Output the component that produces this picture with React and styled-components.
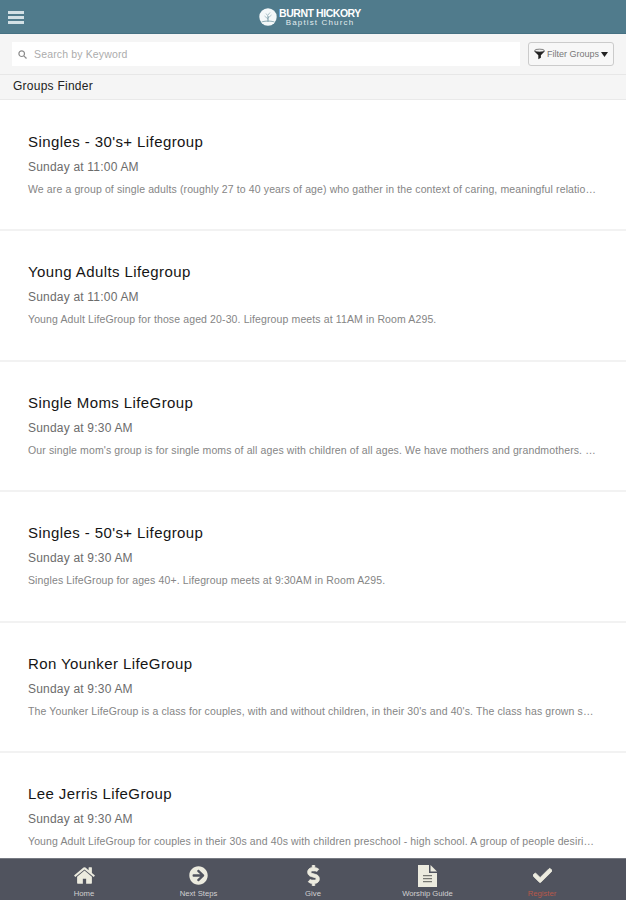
import React, { useState } from "react";
import styled, { createGlobalStyle } from "styled-components";
import { FaArrowCircleRight, FaDollarSign, FaCheck } from "react-icons/fa";

const GlobalStyle = createGlobalStyle`
  * {
    box-sizing: border-box;
  }

  body {
    margin: 0;
    font-family: "Liberation Sans", Arial, sans-serif;
    background: #fff;
  }
`;

const Wrapper = styled.div`
  display: flex;
  flex-direction: column;
  height: 900px;
  overflow: hidden;
`;

const Header = styled.header`
  display: grid;
  grid-template-columns: 1fr auto 1fr;
  align-items: center;
  flex: none;
  height: 34px;
  padding: 0 14px 0 8px;
  background: #507b8c;
  border-bottom: 1px solid #467183;
`;

const MenuButton = styled.button`
  display: flex;
  flex-direction: column;
  gap: 2px;
  width: 16px;
  padding: 1px 0 0;
  border: 0;
  background: none;
`;

const MenuLine = styled.span`
  height: 3px;
  background: #d3e0e5;
`;

const Brand = styled.div`
  display: flex;
  align-items: center;
  gap: 2px;
  color: #fff;
`;

const BrandText = styled.div`
  display: flex;
  flex-direction: column;
  align-items: center;
  width: 83px;
  padding-top: 2px;
`;

const BrandName = styled.span`
  font-size: 10.5px;
  font-weight: 700;
  line-height: 10px;
  letter-spacing: -0.45px;
  white-space: nowrap;
`;

const BrandSub = styled.span`
  font-size: 8px;
  line-height: 10px;
  letter-spacing: 1.15px;
  white-space: nowrap;
  color: #e3ecef;
`;

const SearchBar = styled.div`
  display: flex;
  align-items: center;
  flex: none;
  gap: 8px;
  height: 41px;
  padding: 0 12px;
  background: #f5f5f5;
  border-bottom: 1px solid #e7e7e7;
`;

const SearchBox = styled.label`
  display: flex;
  align-items: center;
  flex: 1;
  gap: 7px;
  height: 24px;
  padding: 0 6px;
  background: #fff;
`;

const SearchInput = styled.input`
  flex: 1;
  min-width: 0;
  padding: 0;
  border: 0;
  outline: 0;
  background: none;
  font-family: inherit;
  font-size: 10.5px;
  letter-spacing: 0.15px;

  &::placeholder {
    color: #acacac;
  }
`;

const FilterButton = styled.button`
  display: flex;
  align-items: center;
  justify-content: center;
  width: 86px;
  height: 24px;
  padding: 0;
  gap: 2px;
  border: 1px solid #cbcbcb;
  border-radius: 3px;
  background: #f7f7f7;
  color: #777;
  font-family: inherit;
  font-size: 9px;
  white-space: nowrap;
`;

const SectionTitle = styled.h1`
  flex: none;
  height: 25px;
  margin: 0;
  padding: 0 13px;
  background: #f5f5f5;
  border-bottom: 1px solid #e9e9e9;
  color: #222;
  font-size: 12px;
  font-weight: 400;
  line-height: 23px;
  letter-spacing: 0.25px;
`;

const GroupList = styled.div`
  flex: 1;
  min-height: 0;
  overflow: hidden;
  padding-top: 1px;
`;

const GroupRow = styled.div`
  height: 130.4px;
  padding: 31px 28px 0;
  border-bottom: 2px solid #f2f2f2;
  white-space: nowrap;
`;

const GroupName = styled.h2`
  margin: 0;
  color: #151515;
  font-size: 15px;
  font-weight: 400;
  line-height: 20px;
  letter-spacing: 0.41px;
`;

const GroupTime = styled.p`
  margin: 5px 0 0;
  color: #6c6c6c;
  font-size: 12px;
  line-height: 20px;
  letter-spacing: 0.2px;
`;

const GroupText = styled.p`
  margin: 3px 0 0;
  color: #858585;
  font-size: 10.5px;
  line-height: 18px;
  letter-spacing: 0.12px;
`;

const TabBar = styled.nav`
  display: grid;
  grid-template-columns: repeat(5, 114.5px);
  justify-content: center;
  flex: none;
  height: 42px;
  background: #50535e;
  border-top: 1px solid #777a82;
`;

const Tab = styled.button`
  display: flex;
  flex-direction: column;
  align-items: center;
  justify-content: flex-start;
  gap: 2px;
  padding: 5px 0 0;
  border: 0;
  background: none;
  color: #ecebdf;
  font-family: inherit;
`;

const TabIcon = styled.span`
  display: flex;
  align-items: center;
  justify-content: center;
  height: 23px;
`;

const TabLabel = styled.span`
  color: ${(props) => (props.$active ? "#b8584a" : "#d0d1d2")};
  font-size: 7.7px;
  line-height: 10px;
`;

const groups = [
  {
    name: "Singles - 30's+ Lifegroup",
    time: "Sunday at 11:00 AM",
    text: "We are a group of single adults (roughly 27 to 40 years of age) who gather in the context of caring, meaningful relatio…",
  },
  {
    name: "Young Adults Lifegroup",
    time: "Sunday at 11:00 AM",
    text: "Young Adult LifeGroup for those aged 20-30. Lifegroup meets at 11AM in Room A295.",
  },
  {
    name: "Single Moms LifeGroup",
    time: "Sunday at 9:30 AM",
    text: "Our single mom's group is for single moms of all ages with children of all ages. We have mothers and grandmothers. …",
  },
  {
    name: "Singles - 50's+ Lifegroup",
    time: "Sunday at 9:30 AM",
    text: "Singles LifeGroup for ages 40+. Lifegroup meets at 9:30AM in Room A295.",
  },
  {
    name: "Ron Younker LifeGroup",
    time: "Sunday at 9:30 AM",
    text: "The Younker LifeGroup is a class for couples, with and without children, in their 30's and 40's. The class has grown s…",
  },
  {
    name: "Lee Jerris LifeGroup",
    time: "Sunday at 9:30 AM",
    text: "Young Adult LifeGroup for couples in their 30s and 40s with children preschool - high school. A group of people desiri…",
  },
];

function TreeLogo() {
  return (
    <svg width="18" height="18" viewBox="0 0 18 18">
      <circle cx="9" cy="9" r="8.7" fill="#f4f8f9" />
      <g fill="none" stroke="#8eabb5" strokeWidth="0.7">
        <path d="M9 11L5.5 8M9 10l3.5-3M9 8L7 5.5M9 7l2-2.5" />
        <path d="M9 14V8" stroke="#6f939f" strokeWidth="1" />
      </g>
      <path d="M2.5 13.4Q9 11.8 15.5 13.4L15 14.2Q9 12.9 3 14.2z" fill="#8eabb5" />
    </svg>
  );
}

function SearchIcon() {
  return (
    <svg width="9" height="9" viewBox="0 0 9 9" fill="none" stroke="#8c8c8c" strokeWidth="1.2">
      <circle cx="3.7" cy="3.7" r="2.8" />
      <path d="M5.8 5.8l2.7 2.7" />
    </svg>
  );
}

function FunnelIcon() {
  return (
    <svg width="11" height="12" viewBox="0 0 12 12">
      <path d="M.5 2.2Q6 5 11.5 2.2v1L7.5 7.4V10L4.7 11.7V7.4L.5 3.2z" fill="#222" />
      <ellipse cx="6" cy="2.2" rx="5.2" ry="1.5" fill="#eee" stroke="#444" strokeWidth="0.7" />
    </svg>
  );
}

function CaretIcon() {
  return (
    <svg width="7" height="5" viewBox="0 0 7 5">
      <path d="M0 0h7L3.5 5z" fill="#222" />
    </svg>
  );
}

function HomeIcon() {
  return (
    <svg width="23" height="23" viewBox="0 0 1792 1792" fill="currentColor">
      <path d="M1472 992v480q0 26-19 45t-45 19h-384v-384h-256v384h-384q-26 0-45-19t-19-45v-480q0-1 .5-3t.5-3l575-474 575 474q1 2 1 6zm223-69l-62 74q-8 9-21 11h-3q-13 0-21-7l-692-577-692 577q-12 8-24 7-13-2-21-11l-62-74q-8-10-7-23.5t11-21.5l719-599q32-26 76-26t76 26l244 204v-195q0-14 9-23t23-9h192q14 0 23 9t9 23v408l219 182q10 8 11 21.5t-7 23.5z" />
    </svg>
  );
}

function DocumentIcon() {
  return (
    <svg width="19" height="22" viewBox="0 0 19 22" fill="#ecebdf">
      <path d="M0 0h11v8h8v14H0z" />
      <path d="M12.5 0L19 6.5h-6.5z" />
      <path d="M5 10.7h9M5 13.7h9M5 16.7h9" stroke="#777873" strokeWidth="1.3" />
    </svg>
  );
}

const tabs = [
  { label: "Home", icon: <HomeIcon /> },
  { label: "Next Steps", icon: <FaArrowCircleRight size={19} /> },
  { label: "Give", icon: <FaDollarSign size={21} stroke="currentColor" strokeWidth={18} /> },
  { label: "Worship Guide", icon: <DocumentIcon /> },
  { label: "Register", icon: <FaCheck size={19} stroke="currentColor" strokeWidth={22} />, active: true },
];

function App() {
  const [keyword, setKeyword] = useState("");

  return (
    <Wrapper>
      <GlobalStyle />
      <Header>
        <MenuButton aria-label="Menu">
          <MenuLine />
          <MenuLine />
          <MenuLine />
        </MenuButton>
        <Brand>
          <TreeLogo />
          <BrandText>
            <BrandName>BURNT HICKORY</BrandName>
            <BrandSub>Baptist Church</BrandSub>
          </BrandText>
        </Brand>
      </Header>
      <SearchBar>
        <SearchBox>
          <SearchIcon />
          <SearchInput
            placeholder="Search by Keyword"
            value={keyword}
            onChange={(e) => setKeyword(e.target.value)}
          />
        </SearchBox>
        <FilterButton>
          <FunnelIcon />
          Filter Groups
          <CaretIcon />
        </FilterButton>
      </SearchBar>
      <SectionTitle>Groups Finder</SectionTitle>
      <GroupList>
        {groups.map((group) => (
          <GroupRow key={group.name}>
            <GroupName>{group.name}</GroupName>
            <GroupTime>{group.time}</GroupTime>
            <GroupText>{group.text}</GroupText>
          </GroupRow>
        ))}
      </GroupList>
      <TabBar>
        {tabs.map((tab) => (
          <Tab key={tab.label}>
            <TabIcon>{tab.icon}</TabIcon>
            <TabLabel $active={tab.active}>{tab.label}</TabLabel>
          </Tab>
        ))}
      </TabBar>
    </Wrapper>
  );
}

export default App;
